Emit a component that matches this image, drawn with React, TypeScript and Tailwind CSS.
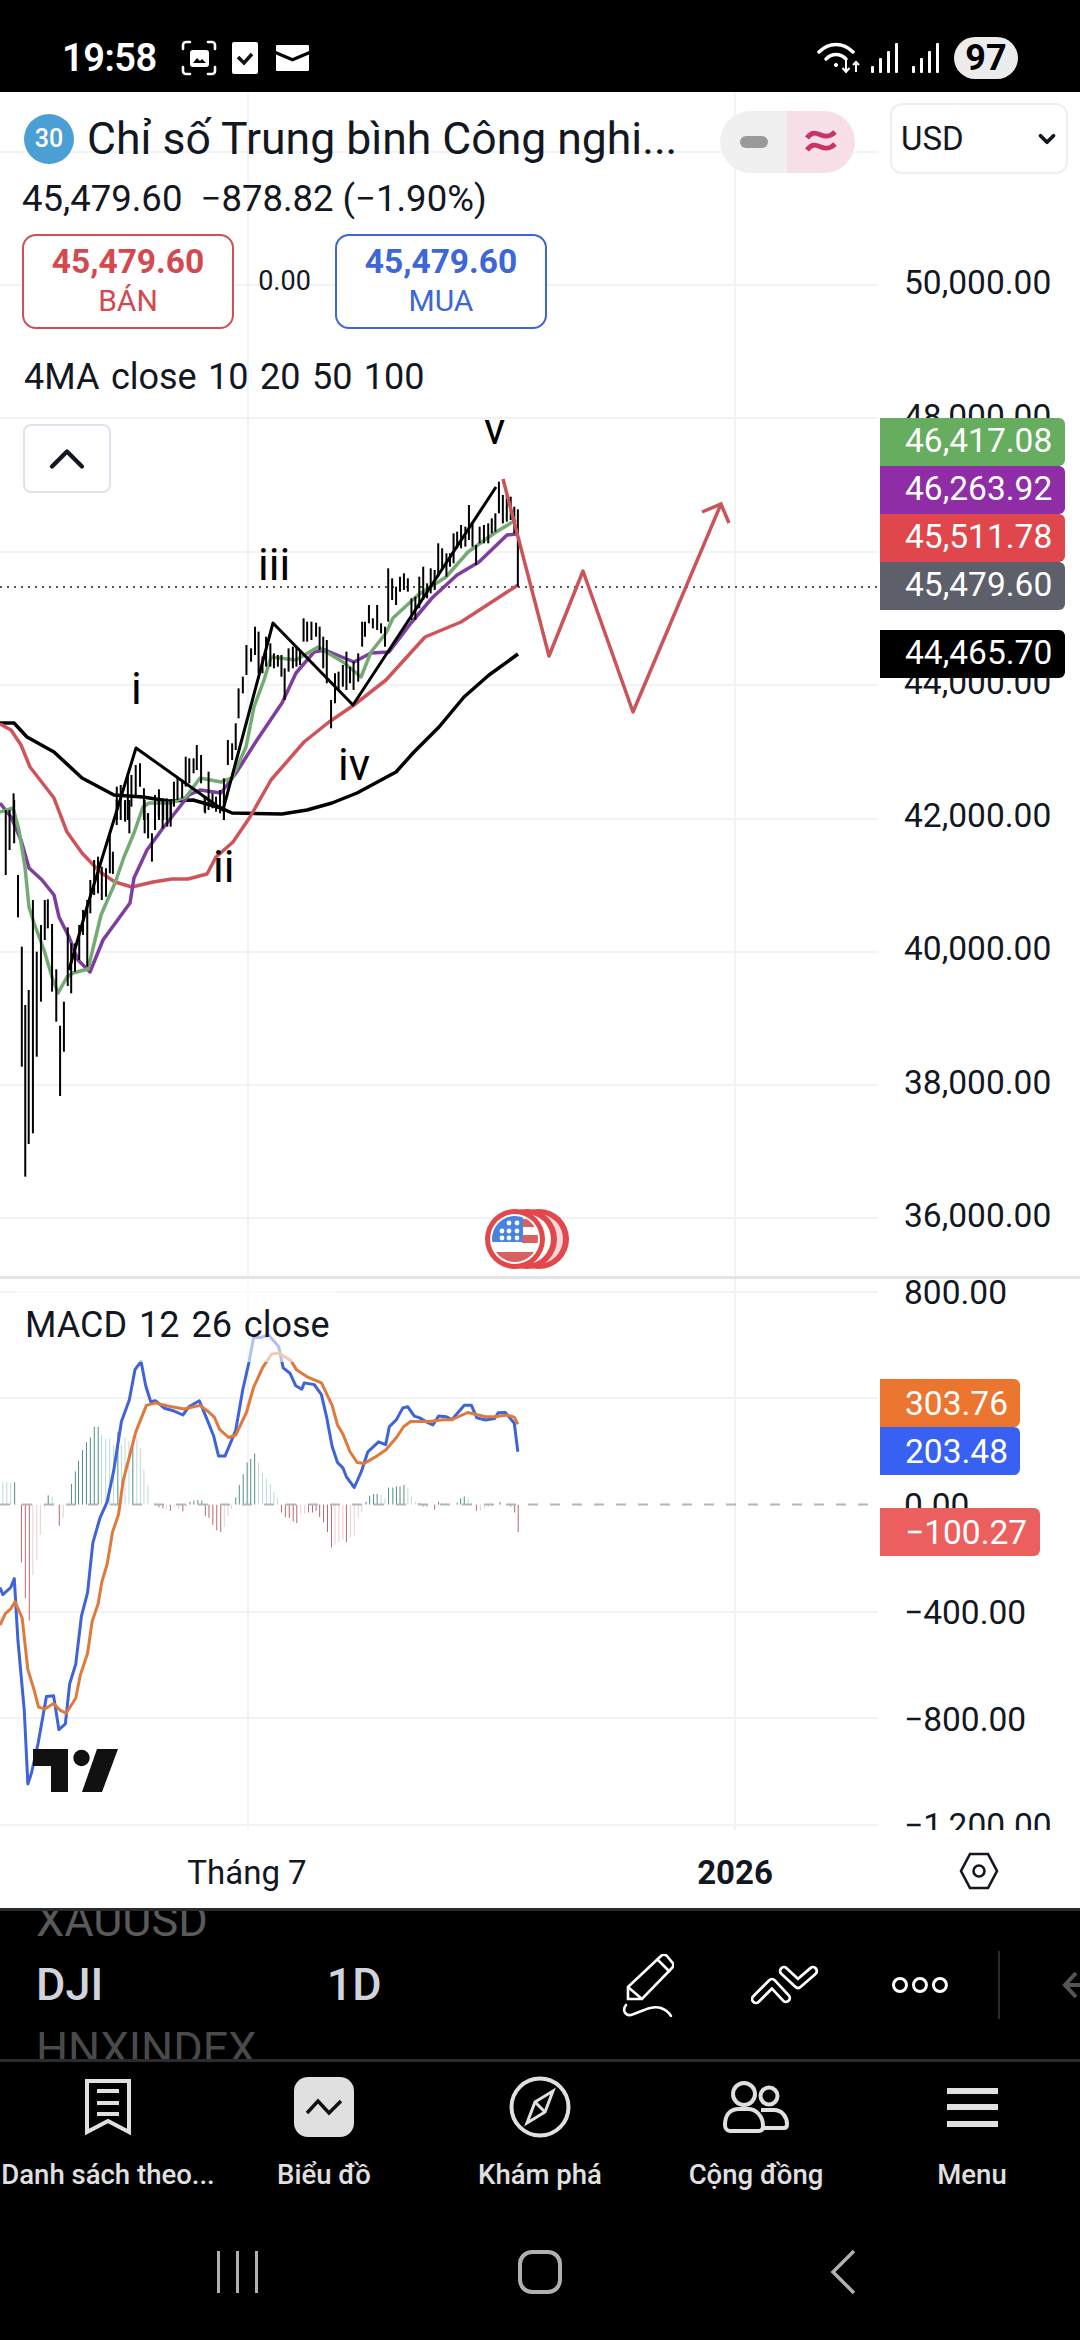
import type { ReactNode } from "react";
import { ChevronDown, ChevronUp } from "lucide-react";

type Pt = [number, number];

// traced values, page pixels
const ma10: Pt[] = [[0,812],[13,808],[19,830],[25,867],[29,907],[34,923],[44,950],[52,977],[58,993],[67,977],[73,973],[88,969],[101,915],[115,883],[124,857],[134,833],[143,807],[149,803],[171,803],[186,797],[200,778],[221,782],[232,778],[246,747],[254,707],[264,680],[271,657],[296,660],[318,647],[343,662],[361,677],[371,652],[386,633],[393,618],[418,595],[446,577],[468,552],[496,532],[516,520]];
const ma20: Pt[] = [[0,803],[11,817],[21,840],[29,868],[42,880],[54,895],[59,917],[69,937],[78,960],[90,972],[103,940],[130,903],[134,878],[147,850],[163,828],[171,818],[189,795],[200,790],[221,793],[236,773],[257,740],[282,703],[296,673],[314,652],[325,650],[354,662],[371,653],[389,652],[411,623],[432,598],[457,575],[479,562],[507,535],[516,534]];
const ma50: Pt[] = [[0,724],[11,730],[21,745],[30,767],[54,798],[67,832],[82,853],[100,872],[115,882],[132,887],[153,882],[172,879],[188,879],[207,874],[216,857],[233,842],[250,817],[271,780],[304,742],[329,722],[354,705],[386,680],[425,637],[461,622],[518,585]];
const ma100: Pt[] = [[0,723],[14,723],[27,737],[54,752],[82,778],[114,795],[143,797],[168,801],[193,800],[221,808],[232,813],[282,814],[307,810],[332,803],[357,793],[396,772],[414,752],[439,727],[464,697],[489,675],[518,654]];
const waves: Pt[] = [[69,970],[87,907],[117,810],[136,748],[223,810],[273,623],[353,705],[496,487]];
const forecast: Pt[] = [[503,479],[549,656],[583,571],[633,712],[721,504]];

// bars read off the lower and upper crops: x, top, bottom in crop units
const barsLow: number[][] = [[15,30,225],[25,30,150],[37,0,130],[47,225,352],[57,440,800],[66,615,1130],[75,570,1032],[86,300,1000],[96,455,770],[107,375,605],[117,300,420],[125,298,385],[136,372,575],[147,508,665],[157,677,888],[167,605,755],[177,382,558],[186,430,580],[196,430,515],[207,375,480],[217,330,405],[228,300,500],[236,240,340],[246,180,285],[256,170,280],[266,200,300],[277,205,290],[287,100,220],[295,155,222],[305,0,75],[327,0,65],[338,0,100],[378,0,100],[387,40,115],[397,100,185],[405,0,90],[415,0,50],[425,0,85],[437,0,80],[446,0,80],[536,0,40],[575,0,40],[585,0,60]];
const barsHigh: number[][] = [[38,1120,1200],[327,1100,1200],[338,1095,1200],[350,1145,1200],[358,1060,1200],[368,1065,1160],[380,1035,1130],[392,1030,1100],[403,1105,1200],[414,1180,1200],[434,1125,1200],[445,1108,1200],[457,1135,1200],[467,1135,1200],[478,1140,1200],[487,1085,1160],[497,1070,1140],[510,1080,1135],[520,1010,1100],[530,1015,1090],[542,1015,1060],[551,975,1050],[563,1005,1090],[573,1130,1175],[584,1055,1170],[595,1120,1165],[605,1130,1175],[616,1110,1170],[627,1075,1200],[638,960,1035],[650,970,1020],[660,910,990],[668,805,895],[680,770,820],[690,675,765],[703,685,725],[714,620,705],[724,635,760],[735,710,760],[745,650,740],[757,670,740],[767,700,745],[778,705,740],[788,705,770],[797,745,840],[808,685,755],[820,680,745],[830,680,740],[840,690,735],[850,595,665],[860,605,665],[872,605,660],[885,608,650],[895,620,690],[905,650,745],[915,660,790],[927,840,925],[938,760,850],[948,755,810],[960,735,800],[970,695,810],[980,740,790],[990,725,810],[1003,700,785],[1014,605,680],[1022,605,650],[1033,555,610],[1044,595,625],[1056,555,630],[1067,610,640],[1078,620,680],[1087,445,605],[1098,475,540],[1109,500,555],[1120,470,515],[1131,460,510],[1142,475,515],[1152,535,600],[1163,530,600],[1174,470,565],[1185,440,540],[1196,490,535],[1206,445,520],[1217,450,510],[1227,370,470],[1238,385,450],[1250,400,470],[1260,400,440],[1270,340,430],[1280,335,385],[1291,315,385],[1303,320,380],[1313,255,360],[1323,310,380],[1333,375,435],[1343,320,370],[1355,315,370],[1367,310,370],[1377,295,340],[1387,280,335],[1397,185,280],[1408,225,310],[1419,225,305],[1430,230,300],[1440,260,340],[1450,268,500]];

// macd pane, same crop units (2.8x)
const macdLine: Pt[] = [[0,805],[8,825],[30,805],[40,780],[50,950],[68,1150],[78,1355],[88,1325],[107,1240],[130,1110],[150,1108],[165,1203],[183,1187],[195,1075],[212,1020],[228,885],[245,820],[260,680],[280,610],[300,565],[318,480],[340,340],[362,280],[378,195],[395,172],[408,240],[422,285],[435,282],[460,303],[485,310],[512,322],[530,298],[558,282],[580,335],[598,380],[612,437],[630,437],[660,365],[680,250],[697,175],[710,105],[730,105],[752,98],[780,130],[793,190],[812,205],[828,240],[845,250],[852,232],[880,237],[900,265],[915,330],[930,410],[945,455],[960,470],[970,495],[992,525],[1012,480],[1030,425],[1060,397],[1080,405],[1090,355],[1110,335],[1128,302],[1142,299],[1160,325],[1175,330],[1195,342],[1212,350],[1228,325],[1250,327],[1265,335],[1300,295],[1320,295],[1335,330],[1360,336],[1385,332],[1395,316],[1415,315],[1440,345],[1450,425]];
const signalLine: Pt[] = [[0,910],[15,878],[30,865],[42,845],[62,890],[78,1035],[95,1090],[108,1140],[125,1145],[150,1130],[170,1150],[185,1157],[212,1115],[225,1050],[245,990],[258,900],[275,850],[285,790],[300,740],[315,650],[332,600],[345,505],[362,440],[380,370],[410,295],[435,288],[470,297],[515,305],[560,295],[580,310],[600,328],[615,362],[640,385],[660,378],[690,315],[710,245],[735,190],[760,152],[780,148],[815,170],[830,195],[860,215],[900,232],[930,295],[945,350],[960,375],[980,425],[1000,455],[1020,458],[1050,440],[1080,420],[1110,385],[1130,355],[1150,340],[1200,340],[1240,335],[1265,335],[1310,315],[1360,327],[1385,327],[1420,322],[1440,328],[1450,348]];

// x, end of bar, strong colour or faded
const histUp: [number, number, number][] = [[8,510,0],[19,510,0],[30,512,0],[41,510,1],[135,547,1],[146,550,0],[189,572,1],[200,515,1],[211,480,1],[220,450,1],[231,420,1],[242,398,1],[253,385,1],[264,355,1],[275,355,1],[284,378,0],[296,388,0],[307,388,0],[318,405,0],[330,370,1],[340,405,0],[350,385,0],[361,395,0],[372,410,1],[383,385,0],[393,415,0],[403,475,0],[414,520,0],[425,570,0],[435,567,0],[532,565,1],[543,562,1],[554,560,1],[565,562,1],[660,553,1],[670,518,1],[681,488,1],[692,455,1],[702,445,1],[713,430,1],[724,455,0],[735,485,0],[746,500,0],[757,515,0],[767,538,0],[777,555,0],[1025,565,1],[1035,548,1],[1046,543,1],[1056,543,1],[1067,545,0],[1078,555,0],[1088,525,1],[1100,525,1],[1110,522,1],[1120,522,1],[1131,518,1],[1142,525,0],[1152,550,0],[1163,565,0],[1173,568,1],[1228,565,1],[1238,567,0],[1249,568,0],[1280,567,1],[1290,555,1],[1300,550,1],[1311,555,0],[1320,568,0],[1400,566,1]];
const histDown: [number, number, number][] = [[60,735,1],[71,835,1],[82,898,1],[92,770,0],[103,727,0],[113,657,0],[124,580,0],[166,632,1],[177,610,0],[445,580,1],[456,583,1],[466,585,0],[477,590,1],[488,582,0],[500,585,0],[512,592,1],[522,580,0],[575,605,1],[585,610,1],[596,630,1],[607,645,1],[618,650,1],[628,635,0],[638,605,0],[648,585,0],[788,595,1],[799,608,1],[810,610,1],[821,620,1],[831,625,1],[842,600,0],[853,598,0],[864,595,1],[875,595,1],[885,590,1],[895,608,1],[906,622,1],[917,650,1],[928,693,1],[938,685,0],[949,678,0],[960,672,0],[970,678,1],[981,665,0],[992,660,0],[1003,610,0],[1013,595,0],[1185,578,1],[1195,578,1],[1217,587,1],[1334,590,1],[1345,590,0],[1356,582,0],[1367,580,0],[1377,578,0],[1430,578,1],[1441,595,1],[1451,650,1]];

const line = (pts: Pt[]) => pts.map(([x, y]) => `${x},${y}`).join(" ");
const macdPts = (pts: Pt[]): Pt[] => pts.map(([x, y]) => [x / 2.8, 1300 + y / 2.8]);

const gridY = [152, 285, 418, 552, 685, 819, 952, 1085, 1218, 1292, 1398, 1612, 1718, 1825];
const flagStars: Pt[] = [[509,1223],[517,1223],[502,1231],[509,1231],[517,1231],[502,1238],[509,1238],[517,1238]];

const ChartCanvas = () => (
    <svg viewBox="0 92 1080 1816" className="absolute inset-0 w-[1080px] h-[1816px]" fill="none">
        {gridY.map((y) => (
            <line key={y} x1={0} x2={878} y1={y} y2={y} stroke="#f1f3f6" strokeWidth={2} />
        ))}
        <line x1={248} x2={248} y1={92} y2={1830} stroke="#f1f3f6" strokeWidth={2} />
        <line x1={735} x2={735} y1={92} y2={1830} stroke="#f1f3f6" strokeWidth={2} />

        {/* macd */}
        {histUp.map(([x, y, strong]) => (
            <line key={x} x1={x / 2.8} x2={x / 2.8} y1={1504.6} y2={1300 + y / 2.8} stroke={strong ? "#4f8f80" : "#bcdcd6"} strokeWidth={1} />
        ))}
        {histDown.map(([x, y, strong]) => (
            <line key={x} x1={x / 2.8} x2={x / 2.8} y1={1504.6} y2={1300 + y / 2.8} stroke={strong ? "#b9686c" : "#eccdd0"} strokeWidth={1} />
        ))}
        <line x1={0} x2={878} y1={1504.5} y2={1504.5} stroke="#b2b5be" strokeWidth={2} strokeDasharray="10 12" />
        <polyline points={line(macdPts(macdLine))} stroke="#3f63d8" strokeWidth={3} strokeLinejoin="round" />
        <polyline points={line(macdPts(signalLine))} stroke="#dd7a3c" strokeWidth={3} strokeLinejoin="round" />

        {/* price pane */}
        <line x1={0} x2={878} y1={587} y2={587} stroke="#555" strokeWidth={2} strokeDasharray="2 5" />
        <polyline points={line(ma100)} stroke="#000" strokeWidth={3.5} strokeLinejoin="round" />
        <polyline points={line(ma50)} stroke="#cf5459" strokeWidth={3.5} strokeLinejoin="round" />
        <polyline points={line(ma20)} stroke="#7f3da0" strokeWidth={3.5} strokeLinejoin="round" />
        <polyline points={line(ma10)} stroke="#74ab72" strokeWidth={3.5} strokeLinejoin="round" />
        {barsLow.map(([x, top, bottom]) => (
            <line key={x} x1={x / 2.613} x2={x / 2.613} y1={800 + top / 3} y2={800 + bottom / 3} stroke="#000" strokeWidth={2} />
        ))}
        {barsHigh.map(([x, top, bottom]) => (
            <line key={x} x1={x / 2.8} x2={x / 2.8} y1={420 + top / 3} y2={420 + bottom / 3} stroke="#000" strokeWidth={2} />
        ))}
        <polyline points={line(waves)} stroke="#000" strokeWidth={3} strokeLinejoin="round" />
        <polyline points={line(forecast)} stroke="#c9545a" strokeWidth={3.5} strokeLinejoin="round" />
        <polyline points="702,512 721,504 729,523" stroke="#c9545a" strokeWidth={3.5} />

        {/* tradingview mark */}
        <g fill="#111">
            <polygon points="33,1749 68,1749 68,1792 51,1792 51,1766 33,1766" />
            <circle cx={81.5} cy={1758} r={8.2} />
            <polygon points="118,1749 97,1749 82,1792 102,1792" />
        </g>

        {/* event flag, three stacked coins */}
        <clipPath id="flagDisc">
            <circle cx={515} cy={1239} r={23} />
        </clipPath>
        <circle cx={539} cy={1239} r={30} fill="#e2474c" />
        <circle cx={538} cy={1239} r={25} fill="#f6d9da" />
        <circle cx={527} cy={1239} r={30} fill="#e2474c" />
        <circle cx={526} cy={1239} r={25} fill="#fff" />
        <circle cx={515} cy={1239} r={30} fill="#e2474c" />
        <circle cx={515} cy={1239} r={25} fill="#fff" />
        <g clipPath="url(#flagDisc)">
            <rect x={522} y={1219} width={20} height={8} fill="#d9605f" />
            <rect x={522} y={1235} width={20} height={8} fill="#d9605f" />
            <rect x={490} y={1252} width={50} height={10} fill="#d9605f" />
            <rect x={490} y={1216} width={33} height={26} fill="#4a82e0" />
        </g>
        {flagStars.map(([x, y]) => (
            <circle key={`${x}-${y}`} cx={x} cy={y} r={2.4} fill="#fff" />
        ))}
    </svg>
);

const SignalBars = ({ className }: { className: string }) => (
    <svg viewBox="0 0 28 30" className={`${className} w-[28px] h-[30px]`} fill="#fff">
        <rect x={0} y={23} width={3} height={7} rx={1} />
        <rect x={8} y={15} width={3} height={15} rx={1} />
        <rect x={16} y={8} width={3} height={22} rx={1} />
        <rect x={24} y={0} width={3} height={30} rx={1} />
    </svg>
);

const StatusBar = () => (
    <div className="h-[92px] pt-[24px] bg-black flex items-center text-white shrink-0">
        <span className="ml-[62px] w-[104px] text-[38px] font-semibold tracking-[-0.5px]">19:58</span>
        <svg viewBox="0 0 36 36" className="ml-[15px] w-[36px] h-[36px]" fill="none">
            <path d="M2 9V5a3 3 0 0 1 3-3h4M27 2h4a3 3 0 0 1 3 3v4M34 27v4a3 3 0 0 1-3 3h-4M9 34H5a3 3 0 0 1-3-3v-4" stroke="#fff" strokeWidth={2.6} strokeLinecap="round" />
            <rect x={9} y={10} width={19} height={17} rx={3} fill="#fff" />
            <path d="M12 23l4-5 3 3 2-2 4 4z" fill="#000" />
        </svg>
        <div className="ml-[15px] w-[26px] h-[32px] bg-white rounded-[2px] flex items-center justify-center">
            <svg viewBox="0 0 20 16" className="w-[20px] h-[16px]" fill="none">
                <path d="M3 7l6 6 8-9" stroke="#111" strokeWidth={3.4} />
            </svg>
        </div>
        <svg viewBox="0 0 33 26" className="ml-[18px] w-[33px] h-[26px]">
            <path d="M1 0h31a1 1 0 0 1 1 1v5L16.500 13 0 6V1a1 1 0 0 1 1-1zM0 9.500l16.500 7 16.500-7V25a1 1 0 0 1-1 1H1a1 1 0 0 1-1-1z" fill="#fff" />
        </svg>
        <svg viewBox="0 0 44 34" className="ml-auto w-[44px] h-[34px]" fill="none" stroke="#fff">
            <path d="M2 11C12 1 26 1 36 11" strokeWidth={3.500} strokeLinecap="round" />
            <path d="M9 18c6-6 14-6 20 0" strokeWidth={3.500} strokeLinecap="round" />
            <circle cx={19} cy={24} r={1.6} fill="#fff" />
            <path d="M29 19v12m-3.500-4 3.500 4 3.500-4" strokeWidth={2} />
            <path d="M39 31V21m-3 3 3-3 3 3" strokeWidth={2} />
        </svg>
        <SignalBars className="ml-[10px]" />
        <SignalBars className="ml-[13px]" />
        <div className="ml-[14px] mr-[62px] w-[64px] h-[42px] rounded-full bg-[#ececec] text-black text-[36px] font-bold flex items-center justify-center">97</div>
    </div>
);

const QuoteButton = ({ side, colorClass }: { side: string; colorClass: string }) => (
    <div className={`w-[212px] h-[95px] pb-[3px] border-2 rounded-[14px] bg-white flex flex-col items-center justify-center ${colorClass}`}>
        <span className="text-[33.500px] leading-[42px] font-bold">45,479.60</span>
        <span className="text-[30px] leading-[36px]">{side}</span>
    </div>
);

const Header = () => (
    <div className="relative flex flex-col text-[#131722]">
        <div className="h-[71px] mt-[11px] flex items-center">
            <div className="ml-[24px] w-[50px] h-[50px] rounded-full bg-[#4a9fd5] text-white text-[25px] font-medium flex items-center justify-center">30</div>
            <span className="ml-[13px] w-[596px] text-[44.500px] leading-[52px] truncate">Chỉ số Trung bình Công nghi...</span>
            <div className="ml-[37px] mt-[6px] w-[135px] h-[62px] rounded-full overflow-hidden flex shrink-0">
                <div className="w-[67px] bg-[#f0f0f1] flex items-center justify-center">
                    <div className="w-[28px] h-[12px] rounded-full bg-[#9a9a9a]" />
                </div>
                <div className="flex-1 bg-[#f7dfe8] flex items-center justify-center">
                    <svg viewBox="0 0 32 26" className="w-[32px] h-[26px]" fill="none" stroke="#c8336a" strokeWidth={5}>
                        <path d="M2 9c5-7 9-5 14-3s9 2 14-3" />
                        <path d="M2 21c5-7 9-5 14-3s9 2 14-3" />
                    </svg>
                </div>
            </div>
            <div className="ml-[35px] w-[178px] h-[71px] border-2 border-[#eeeff1] rounded-[12px] bg-white flex items-center justify-between pl-[9px] pr-[6px] shrink-0">
                <span className="text-[33px]">USD</span>
                <ChevronDown className="w-[26px] h-[26px]" strokeWidth={3.5} />
            </div>
        </div>
        <div className="h-[48px] pt-[1px] pl-[22px] text-[36.500px] leading-[48px] whitespace-pre">45,479.60  −878.82 (−1.90%)</div>
        <div className="mt-[12px] pl-[22px] flex items-center">
            <QuoteButton side="BÁN" colorClass="border-[#cc5257] text-[#d4494f]" />
            <span className="w-[101px] text-center text-[27px]">0.00</span>
            <QuoteButton side="MUA" colorClass="border-[#3d66d6] text-[#3d66d6]" />
        </div>
        <div className="mt-[24px] h-[48px] pl-[24px] text-[36px] leading-[48px] [word-spacing:2.5px]">4MA close 10 20 50 100</div>
        <div className="mt-[23px] ml-[23px] w-[88px] h-[69px] border-2 border-[#e0e3eb] rounded-[8px] bg-white flex items-center justify-center">
            <ChevronUp className="w-[60px] h-[60px]" strokeWidth={1.7} />
        </div>
    </div>
);

const PriceAxis = ({ ticks, top, rowClass }: { ticks: string[]; top: string; rowClass: string }) => (
    <div className={`absolute left-[904px] flex flex-col text-[33.500px] text-[#131722] ${top}`}>
        {ticks.map((t) => (
            <div key={t} className={`flex items-center ${rowClass}`}>{t}</div>
        ))}
    </div>
);

const Tag = ({ value, className }: { value: string; className: string }) => (
    <div className={`h-[48px] rounded-r-[6px] pl-[25px] text-white text-[33.500px] ${className}`}>{value}</div>
);

const WaveLabel = ({ text, className }: { text: string; className: string }) => (
    <span className={`absolute text-[44px] leading-none text-black ${className}`}>{text}</span>
);

const PricePane = () => (
    <div className="relative h-[1187px] border-b-[3px] border-[#e3e4e6] shrink-0">
        <PriceAxis
            ticks={["50,000.00", "48,000.00", "46,000.00", "44,000.00", "42,000.00", "40,000.00", "38,000.00", "36,000.00"]}
            top="top-[125px]"
            rowClass="h-[133.200px]"
        />
        <WaveLabel text="v" className="left-[484px] top-[315px]" />
        <WaveLabel text="iii" className="left-[258px] top-[451px]" />
        <WaveLabel text="i" className="left-[131px] top-[575px]" />
        <WaveLabel text="iv" className="left-[338px] top-[651px]" />
        <WaveLabel text="ii" className="left-[213px] top-[753px]" />
        <Header />
        <div className="absolute left-[880px] top-[326px] w-[185px] flex flex-col">
            <Tag value="46,417.08" className="leading-[46px] bg-[#66ad60]" />
            <Tag value="46,263.92" className="leading-[46px] bg-[#8e2da6]" />
            <Tag value="45,511.78" className="leading-[46px] bg-[#e0474c]" />
            <Tag value="45,479.60" className="leading-[46px] bg-[#5d606b]" />
            <Tag value="44,465.70" className="leading-[46px] bg-black mt-[20px]" />
        </div>
    </div>
);

const MacdPane = () => (
    <div className="relative h-[551px] overflow-hidden shrink-0">
        <div className="absolute left-[16px] top-0 w-[320px] h-[83px] bg-white/60" />
        <span className="absolute left-[25px] top-[24px] text-[36px] leading-[44px] text-[#131722] [word-spacing:3px]">MACD 12 26 close</span>
        <PriceAxis
            ticks={["800.00", "400.00", "0.00", "−400.00", "−800.00", "−1,200.00"]}
            top="top-[-39px]"
            rowClass="h-[106.600px]"
        />
        <div className="absolute left-[880px] top-[100px] w-[140px] flex flex-col">
            <Tag value="303.76" className="leading-[49px] bg-[#ec7530]" />
            <Tag value="203.48" className="leading-[49px] bg-[#3861f3]" />
        </div>
        <Tag value="−100.27" className="absolute left-[880px] top-[229px] w-[160px] leading-[49px] bg-[#ec5f5f]" />
    </div>
);

const TimeAxis = () => (
    <div className="relative h-[78px] shrink-0 text-[33px] text-[#131722]">
        <span className="absolute left-[247px] top-[18px] -translate-x-1/2">Tháng 7</span>
        <span className="absolute left-[735px] top-[18px] -translate-x-1/2 font-bold">2026</span>
        <svg viewBox="0 0 40 40" className="absolute left-[959px] top-[21px] w-[40px] h-[40px]" fill="none" stroke="#131722" strokeWidth={2.6}>
            <path d="M11 3h18l9 17-9 17H11L2 20z" />
            <circle cx={20} cy={20} r={5.500} />
        </svg>
    </div>
);

const Toolbar = () => (
    <div className="relative h-[154px] shrink-0 border-y-[3px] border-[#2a2b2e] flex items-center overflow-hidden text-[45px] font-medium">
        <div className="ml-[36px] w-[291px] flex flex-col">
            <span className="h-[64px] leading-[64px] font-normal text-[#5a5a5a]">XAUUSD</span>
            <span className="h-[64px] leading-[64px] text-[#d1d4dc]">DJI</span>
            <span className="h-[64px] leading-[64px] font-normal text-[#4a4a4a]">HNXINDEX</span>
        </div>
        <span className="w-[295px] text-[#d1d4dc]">1D</span>
        <svg viewBox="0 0 53 63" className="w-[53px] h-[63px]" fill="none" stroke="#fff" strokeWidth={2.600}>
            <path d="M7 33 40 2a4 4 0 0 1 6 0l5 6a4 4 0 0 1 0 6L21 45H7z" />
            <path d="M7 33l14 12M36 5l13 13" />
            <path d="M5 51c-4 5-1 11 5 10 10-3 20-10 30-7 5 2 8 4 10 8" strokeLinecap="round" />
        </svg>
        <svg viewBox="0 0 68 40" className="ml-[77px] w-[68px] h-[40px]" fill="none" strokeLinecap="round" strokeLinejoin="round">
            <path d="M5 34 21 18l14 15" stroke="#fff" strokeWidth={10.500} />
            <path d="M5 34 21 18l14 15" stroke="#000" strokeWidth={5} />
            <path d="M33 6 47 19 62 6" stroke="#fff" strokeWidth={10.500} />
            <path d="M33 6 47 19 62 6" stroke="#000" strokeWidth={5} />
        </svg>
        <svg viewBox="0 0 58 18" className="ml-[72px] w-[58px] h-[18px]" fill="none" stroke="#fff" strokeWidth={3}>
            <circle cx={9} cy={9} r={6.500} />
            <circle cx={29} cy={9} r={6.500} />
            <circle cx={49} cy={9} r={6.500} />
        </svg>
        <div className="ml-[49px] w-[2px] h-[68px] bg-[#2a2b2e]" />
        <svg viewBox="0 0 18 28" className="ml-[62px] w-[18px] h-[28px]" fill="none" stroke="#555" strokeWidth={4}>
            <path d="M14 2 3 14l11 12M3 14h16" />
        </svg>
    </div>
);

const NavItem = ({ label, icon }: { label: string; icon: ReactNode }) => (
    <div className="min-w-0 flex flex-col items-center">
        <div className="h-[64px] flex items-center justify-center">{icon}</div>
        <span className="mt-[16px] w-full text-center whitespace-nowrap text-[27.500px] leading-[40px] font-medium text-[#e0e0e0]">{label}</span>
    </div>
);

const BottomNav = () => (
    <div className="grid grid-cols-5 pt-[13px] shrink-0">
        <NavItem
            label="Danh sách theo..."
            icon={
                <svg viewBox="0 0 46 56" className="w-[46px] h-[56px]" fill="none" stroke="#e0e0e0" strokeWidth={4}>
                    <path d="M2 2h42v51L23 42 2 53z" />
                    <path d="M12 12h22M12 24h22M12 35h22" />
                </svg>
            }
        />
        <NavItem
            label="Biểu đồ"
            icon={
                <svg viewBox="0 0 60 60" className="w-[60px] h-[60px]">
                    <rect width={60} height={60} rx={14} fill="#e0e0e0" />
                    <path d="M13 36 24 24l11 12 12-12" fill="none" stroke="#111" strokeWidth={3.500} />
                </svg>
            }
        />
        <NavItem
            label="Khám phá"
            icon={
                <svg viewBox="0 0 62 62" className="w-[62px] h-[62px]" fill="none" stroke="#e0e0e0" strokeWidth={4}>
                    <circle cx={31} cy={31} r={28.500} />
                    <path d="M44 15 36 36 18 47l8-21z" strokeWidth={3} />
                    <path d="M26 26l10 10" strokeWidth={3} />
                </svg>
            }
        />
        <NavItem
            label="Cộng đồng"
            icon={
                <svg viewBox="0 0 66 52" className="w-[66px] h-[52px]" fill="none" stroke="#e0e0e0" strokeWidth={4}>
                    <circle cx={21} cy={13} r={11} />
                    <circle cx={46} cy={15} r={8.500} />
                    <path d="M2 44c0-11 6-16 14-16h9c8 0 15 7 15 17 0 3-1 5-4 5H7c-3 0-5-3-5-6z" />
                    <path d="M38 29h13c8 0 13 7 13 14 0 3-1 4-3 4H40" />
                </svg>
            }
        />
        <NavItem
            label="Menu"
            icon={
                <div className="w-[51px] h-[39px] flex flex-col justify-between">
                    <div className="h-[6px] bg-[#e0e0e0]" />
                    <div className="h-[6px] bg-[#e0e0e0]" />
                    <div className="h-[6px] bg-[#e0e0e0]" />
                </div>
            }
        />
    </div>
);

const SystemNav = () => (
    <div className="mt-[54px] flex items-center">
        <div className="ml-[217px] w-[41px] h-[42px] flex justify-between">
            <div className="w-[3px] bg-[#b0b0b0]" />
            <div className="w-[3px] bg-[#b0b0b0]" />
            <div className="w-[3px] bg-[#b0b0b0]" />
        </div>
        <div className="ml-[260px] w-[44px] h-[44px] border-[4px] border-[#b0b0b0] rounded-[14px]" />
        <svg viewBox="0 0 26 46" className="ml-[268px] w-[26px] h-[46px]" fill="none" stroke="#b0b0b0" strokeWidth={3.500}>
            <path d="M24 2 3 23l21 21" />
        </svg>
    </div>
);

export default function App() {
    return (
        <div className="w-[1080px] h-[2340px] bg-black flex flex-col overflow-hidden font-[Roboto,sans-serif]">
            <StatusBar />
            <div className="relative h-[1816px] bg-white shrink-0">
                <ChartCanvas />
                <PricePane />
                <MacdPane />
                <TimeAxis />
            </div>
            <Toolbar />
            <BottomNav />
            <SystemNav />
        </div>
    );
}
